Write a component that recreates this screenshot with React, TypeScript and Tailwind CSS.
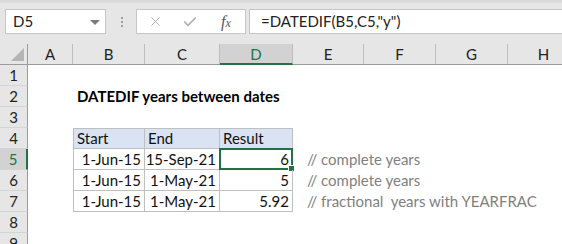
import { X, Check } from "lucide-react";

const cols = [
  { id: "A", w: "w-[45px]" },
  { id: "B", w: "w-[72px]" },
  { id: "C", w: "w-[75px]" },
  { id: "D", w: "w-[73px]" },
  { id: "E", w: "w-[71px]" },
  { id: "F", w: "w-[72px]" },
  { id: "G", w: "w-[72px]" },
  { id: "H", w: "w-[72px]" },
];

const rows = [
  { start: "1-Jun-15", end: "15-Sep-21", result: "6", note: "// complete years" },
  { start: "1-Jun-15", end: "1-May-21", result: "5", note: "// complete years" },
  { start: "1-Jun-15", end: "1-May-21", result: "5.92", note: "// fractional  years with YEARFRAC" },
];

function RowHead({ n, active }: { n: number; active?: boolean }) {
  return (
    <div
      className={
        "w-[28px] h-[21px] shrink-0 flex items-center justify-center border-b border-[#d4d4d4] " +
        (active
          ? "bg-[#d2d2d2] text-[#217346] border-r-2 border-r-[#217346]"
          : "bg-[#e6e6e6] text-[#222] border-r border-r-[#9b9b9b]")
      }
    >
      {n}
    </div>
  );
}

export default function App() {
  return (
    <div
      className="w-[562px] h-[244px] overflow-hidden bg-white text-[15px] leading-none text-[#111]"
      style={{ fontFamily: "Lato, 'Noto Sans', sans-serif" }}
    >
      {/* formula bar */}
      <div className="h-[44px] bg-[#e6e6e6] border-t-[3px] border-[#dadada] pt-[6px] flex items-start">
        <div className="ml-[5px] w-[101px] h-[25px] bg-white border border-[#c6c6c6] flex items-center pl-[7px] relative text-[#222]">
          D5
          <span className="absolute right-[5px] top-[10px] border-x-[5px] border-x-transparent border-t-[5px] border-t-[#7a7a7a]" />
        </div>
        <div className="ml-[15px] mt-[8px] flex flex-col gap-[2px]">
          <span className="w-[2px] h-[2px] bg-[#a0a0a0]" />
          <span className="w-[2px] h-[2px] bg-[#a0a0a0]" />
          <span className="w-[2px] h-[2px] bg-[#a0a0a0]" />
        </div>
        <div className="ml-[13px] w-[110px] h-[25px] bg-white border border-[#c6c6c6] flex items-center">
          <X size={15} strokeWidth={1.5} className="ml-[11px] text-[#a8a8a8]" />
          <Check size={16} strokeWidth={2.5} className="ml-[19px] text-[#b0b0b0]" />
          <span
            className="ml-[23px] text-[#555] italic text-[16px]"
            style={{ fontFamily: "'Liberation Serif', serif" }}
          >
            f<span className="text-[12px]">x</span>
          </span>
        </div>
        <div className="ml-[3px] flex-1 h-[25px] bg-white border border-r-0 border-[#c6c6c6] flex items-center pl-[11px] text-[#222]">
          =DATEDIF(B5,C5,"y")
        </div>
      </div>

      {/* column headers */}
      <div className="flex h-[21px] bg-[#e6e6e6] border-b border-[#9b9b9b]">
        <div className="w-[28px] shrink-0 border-r border-[#9b9b9b] relative">
          <span className="absolute right-[3px] bottom-[3px] border-l-[13px] border-l-transparent border-b-[13px] border-b-[#b4b4b4]" />
        </div>
        {cols.map((c) => (
          <div
            key={c.id}
            className={
              c.w +
              " shrink-0 flex items-center justify-center pt-px border-r border-[#bdbdbd] " +
              (c.id === "D" ? "bg-[#d2d2d2] text-[#217346] border-b-2 border-b-[#217346] -mb-px" : "text-[#222]")
            }
          >
            {c.id}
          </div>
        ))}
      </div>

      {/* rows 1-3 */}
      <div className="flex">
        <RowHead n={1} />
      </div>
      <div className="flex">
        <RowHead n={2} />
        <div className="w-[45px] shrink-0" />
        <div className="pl-[4px] flex items-center font-bold whitespace-nowrap text-black">
          DATEDIF years between dates
        </div>
      </div>
      <div className="flex">
        <RowHead n={3} />
      </div>

      {/* row 4 table header */}
      <div className="flex">
        <RowHead n={4} />
        <div className="w-[45px] shrink-0" />
        <div className="w-[72px] h-[21px] shrink-0 bg-[#dae3f3] border border-[#bfbfbf] pl-[3px] flex items-center">Start</div>
        <div className="w-[75px] h-[21px] shrink-0 bg-[#dae3f3] border-y border-r border-[#bfbfbf] pl-[3px] flex items-center">End</div>
        <div className="w-[73px] h-[21px] shrink-0 bg-[#dae3f3] border-y border-r border-[#bfbfbf] pl-[3px] flex items-center">Result</div>
      </div>

      {rows.map((r, i) => (
        <div key={i} className="flex">
          <RowHead n={5 + i} active={i === 0} />
          <div className="w-[45px] shrink-0" />
          <div className="w-[72px] h-[21px] shrink-0 border-x border-b border-[#bfbfbf] pr-[3px] flex items-center justify-end">{r.start}</div>
          <div className="w-[75px] h-[21px] shrink-0 border-r border-b border-[#bfbfbf] pr-[3px] flex items-center justify-end">{r.end}</div>
          <div className="w-[73px] h-[21px] shrink-0 border-r border-b border-[#bfbfbf] pr-[3px] flex items-center justify-end relative">
            {r.result}
            {i === 0 && (
              <>
                <span className="absolute -left-px -top-px -right-px -bottom-px border-2 border-[#217346]" />
                <span className="absolute -right-[3px] -bottom-[3px] w-[5px] h-[5px] bg-[#217346] border border-white box-content" />
              </>
            )}
          </div>
          <div className="pl-[14px] flex items-center whitespace-pre text-[#7f7f7f]">{r.note}</div>
        </div>
      ))}

      <div className="flex">
        <RowHead n={8} />
      </div>
      <div className="flex">
        <RowHead n={9} />
      </div>
    </div>
  );
}
